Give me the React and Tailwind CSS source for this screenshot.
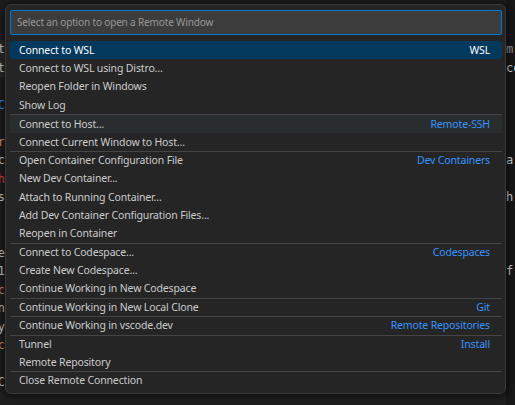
import React from "react";

const rows = [
  { t: "Connect to WSL", l: "WSL", active: true },
  { t: "Connect to WSL using Distro..." },
  { t: "Reopen Folder in Windows" },
  { t: "Show Log" },
  { t: "Connect to Host...", l: "Remote-SSH", sep: true, hover: true },
  { t: "Connect Current Window to Host..." },
  { t: "Open Container Configuration File", l: "Dev Containers", sep: true },
  { t: "New Dev Container..." },
  { t: "Attach to Running Container..." },
  { t: "Add Dev Container Configuration Files..." },
  { t: "Reopen in Container" },
  { t: "Connect to Codespace...", l: "Codespaces", sep: true },
  { t: "Create New Codespace..." },
  { t: "Continue Working in New Codespace" },
  { t: "Continue Working in New Local Clone", l: "Git", sep: true },
  { t: "Continue Working in vscode.dev", l: "Remote Repositories", sep: true },
  { t: "Tunnel", l: "Install", sep: true },
  { t: "Remote Repository" },
  { t: "Close Remote Connection", sep: true },
];

const leftFrag = {
  0: ["t", "text-[#d4d4d4]"],
  1: ["t", "text-[#d4d4d4]"],
  3: ["C", "text-[#3794ff]"],
  5: ["r", "text-[#ce9178]"],
  6: ["c", "text-[#d4d4d4]"],
  7: ["h", "text-[#f44747]"],
  8: ["s", "text-[#d4d4d4]"],
  11: ["e", "text-[#d4d4d4]"],
  12: ["1", "text-[#d4d4d4]"],
  13: ["c", "text-[#ce9178]"],
  14: ["n", "text-[#d4d4d4]"],
  15: ["y", "text-[#d4d4d4]"],
  16: ["c", "text-[#ce9178]"],
  18: ["C", "text-[#d4d4d4]"],
};

const rightFrag = {
  0: ["m", "text-[#9d9d9d]"],
  1: ["co", "text-[#d4d4d4]"],
  6: ["a", "text-[#d4d4d4]"],
  8: ["h", "text-[#d4d4d4]"],
  12: ["f", "text-[#d4d4d4]"],
};

const lineIdx = Array.from({ length: 19 }, (_, i) => i);

export default function App() {
  return (
    <div className="relative w-[515px] h-[405px] overflow-hidden bg-[#1f1f1f] font-['Noto_Sans',sans-serif]">
      {/* editor background */}
      <div className="flex h-full">
        <div className="w-[5px] overflow-hidden flex flex-col pt-[40px] font-['DejaVu_Sans_Mono',monospace] text-[12px]">
          {lineIdx.map((i) => (
            <div key={i} className={`h-[18.5px] leading-[18.5px] flex justify-end ${i < 2 ? "bg-[#2b2b2b]" : ""}`}>
              <span className={leftFrag[i] ? leftFrag[i][1] : ""}>{leftFrag[i] ? leftFrag[i][0] : ""}</span>
            </div>
          ))}
        </div>
        <div className="flex-1" />
        <div className="w-[9px] overflow-hidden flex flex-col pt-[40px] bg-[#181818] font-['DejaVu_Sans_Mono',monospace] text-[12px]">
          {lineIdx.map((i) => (
            <div key={i} className="h-[18.5px] leading-[18.5px] whitespace-nowrap">
              <span className={rightFrag[i] ? rightFrag[i][1] : ""}>{rightFrag[i] ? rightFrag[i][0] : ""}</span>
            </div>
          ))}
        </div>
      </div>

      {/* quick pick overlay */}
      <div className="absolute left-[5px] top-[4px] w-[501px] rounded-[6px] border border-[#3a3a3a] bg-[#252526] pl-[4px] pr-[3px] pt-[5px] pb-[3px] shadow-[0_0_8px_2px_rgba(0,0,0,0.6)]">
        <div className="h-[25px] rounded-[2px] border border-[#0078d4] bg-[#3c3c3c] flex items-center pl-[6px] text-[10px] tracking-[-0.15px] text-[#989898]">
          Select an option to open a Remote Window
        </div>
        <div className="mt-[6px] flex flex-col">
          {rows.map((r, i) => (
            <div
              key={i}
              className={`h-[18.35px] flex items-center justify-between pl-[9px] pr-[12px] pt-[1px] text-[10.5px] tracking-[-0.15px] whitespace-nowrap ${
                r.sep ? "border-t border-[#454545]" : ""
              } ${r.active ? "bg-[#04395e] rounded-[3px] text-white" : r.hover ? "bg-[#2a2d2e] text-[#cccccc]" : "text-[#cccccc]"}`}
            >
              <span>{r.t}</span>
              {r.l && <span className={r.active ? "text-white" : "text-[#3794ff]"}>{r.l}</span>}
            </div>
          ))}
        </div>
      </div>
    </div>
  );
}
